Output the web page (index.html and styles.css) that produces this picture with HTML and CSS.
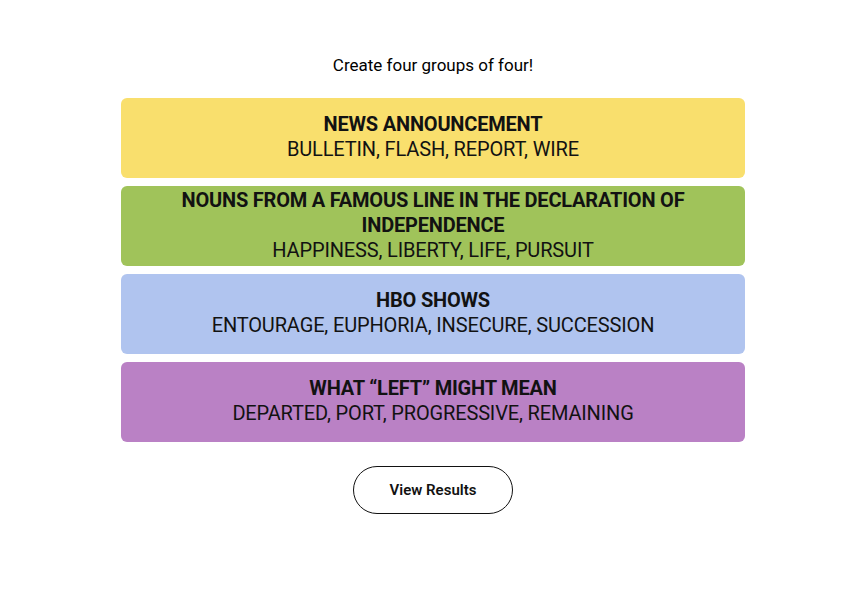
FILE: index.html
```html
<!DOCTYPE html>
<html>
<head>
<meta charset="utf-8">
<link rel="stylesheet" href="styles.css">
</head>
<body>
<main class="game">
  <p class="prompt">Create four groups of four!</p>
  <section class="groups">
    <div class="group yellow">
      <h3 class="name">NEWS ANNOUNCEMENT</h3>
      <p class="words">BULLETIN, FLASH, REPORT, WIRE</p>
    </div>
    <div class="group green">
      <h3 class="name">NOUNS FROM A FAMOUS LINE IN THE DECLARATION OF INDEPENDENCE</h3>
      <p class="words">HAPPINESS, LIBERTY, LIFE, PURSUIT</p>
    </div>
    <div class="group blue">
      <h3 class="name">HBO SHOWS</h3>
      <p class="words">ENTOURAGE, EUPHORIA, INSECURE, SUCCESSION</p>
    </div>
    <div class="group purple">
      <h3 class="name">WHAT “LEFT” MIGHT MEAN</h3>
      <p class="words">DEPARTED, PORT, PROGRESSIVE, REMAINING</p>
    </div>
  </section>
  <button class="results">View Results</button>
</main>
</body>
</html>
```

FILE: styles.css
```css
html, body {
  margin: 0;
  padding: 0;
  background: #fff;
}
body {
  font-family: Roboto, "Liberation Sans", sans-serif;
  color: #121212;
}
.game {
  display: flex;
  flex-direction: column;
  align-items: center;
  padding-top: 54px;
  padding-left: 2px;
}
.prompt {
  margin: 0;
  font-size: 17px;
  line-height: 22px;
  color: #000;
}
.groups {
  margin-top: 22px;
  width: 624px;
  display: flex;
  flex-direction: column;
  gap: 8px;
}
.group {
  height: 80px;
  border-radius: 6px;
  display: flex;
  flex-direction: column;
  justify-content: center;
  align-items: center;
  text-align: center;
  padding: 0 40px 2px;
  box-sizing: border-box;
}
.name {
  margin: 0;
  font-size: 20px;
  line-height: 25px;
  font-weight: 700;
  letter-spacing: -0.2px;
}
.words {
  margin: 0;
  font-size: 20px;
  line-height: 25px;
  font-weight: 400;
  letter-spacing: -0.15px;
}
.yellow { background: #f9df6d; }
.green { background: #a0c35a; }
.blue { background: #b0c4ef; }
.purple { background: #ba81c5; }
.results {
  margin-top: 24px;
  width: 160px;
  height: 48px;
  border: 1px solid #121212;
  border-radius: 24px;
  background: #fff;
  font-family: Roboto, "Liberation Sans", sans-serif;
  font-size: 15px;
  font-weight: 600;
  color: #121212;
  cursor: pointer;
}
```
